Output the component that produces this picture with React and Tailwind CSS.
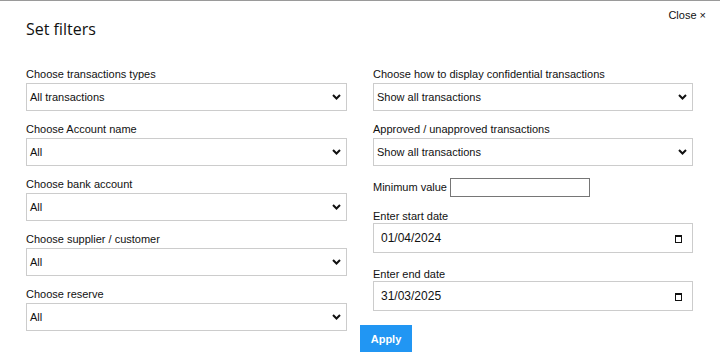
const left = [
  { label: 'Choose transactions types', value: 'All transactions' },
  { label: 'Choose Account name', value: 'All' },
  { label: 'Choose bank account', value: 'All' },
  { label: 'Choose supplier / customer', value: 'All' },
  { label: 'Choose reserve', value: 'All' },
];

const right = [
  { label: 'Choose how to display confidential transactions', value: 'Show all transactions' },
  { label: 'Approved / unapproved transactions', value: 'Show all transactions' },
];

function Chevron() {
  return (
    <svg className="pointer-events-none absolute right-[5px] top-1/2 h-[6px] w-[9px] -translate-y-1/2" viewBox="0 0 9 6" fill="none">
      <path d="M1 1l3.5 3.5L8 1" stroke="#111" strokeWidth="2" />
    </svg>
  );
}

function Select({ label, value }) {
  return (
    <div className="flex flex-col">
      <label className="mb-[2px] h-[14px] text-[11px] leading-[14px] text-[#111]">{label}</label>
      <div className="relative flex h-[28px] items-center border border-[#cccccc] bg-white pl-[3px] text-[11px] text-[#111]">
        {value}
        <Chevron />
      </div>
    </div>
  );
}

function DateField({ label, value }) {
  return (
    <div className="flex flex-col">
      <label className="mb-[0px] h-[14px] text-[11px] leading-[14px] text-[#111]">{label}</label>
      <div className="flex h-[30px] items-center justify-between border border-[#cccccc] bg-white pl-[7px] pr-[10px] text-[12px] text-[#111]">
        <span>{value}</span>
        <svg className="h-[9px] w-[7px]" viewBox="0 0 7 9" fill="none">
          <rect x="0.5" y="1.5" width="6" height="7" stroke="#111" />
          <rect x="0" y="1" width="7" height="2" fill="#111" />
        </svg>
      </div>
    </div>
  );
}

export default function App() {
  return (
    <div className="h-[352px] w-[720px] overflow-hidden border-t border-[#9a9a9a] bg-white font-['Liberation_Sans',Arial,sans-serif]">
      <div className="flex items-start justify-between">
        <h2 className="ml-[26px] mt-[17px] font-['Open_Sans',sans-serif] text-[16px] leading-[22px] text-[#111]">Set filters</h2>
        <button className="mr-[14px] mt-[7px] text-[11px] leading-[14px] text-[#111]" type="button">
          Close ×
        </button>
      </div>
      <div className="mt-[27px] flex gap-[26px] px-[26px]">
        <div className="flex w-[321px] flex-col gap-[11px]">
          {left.map((f) => (
            <Select key={f.label} {...f} />
          ))}
        </div>
        <div className="flex w-[320px] flex-col">
          <div className="flex flex-col gap-[11px]">
            {right.map((f) => (
              <Select key={f.label} {...f} />
            ))}
          </div>
          <div className="mt-[12px] flex items-center gap-[3px]">
            <span className="text-[11px] text-[#111]">Minimum value</span>
            <input className="h-[19px] w-[140px] border border-[#767676] bg-white" type="text" />
          </div>
          <div className="mt-[12px] flex flex-col gap-[14px]">
            <DateField label="Enter start date" value="01/04/2024" />
            <DateField label="Enter end date" value="31/03/2025" />
          </div>
          <button className="-ml-[13px] mt-[14px] h-[28px] w-[52px] bg-[#2196f3] text-[11px] font-bold text-white" type="button">
            Apply
          </button>
        </div>
      </div>
    </div>
  );
}
